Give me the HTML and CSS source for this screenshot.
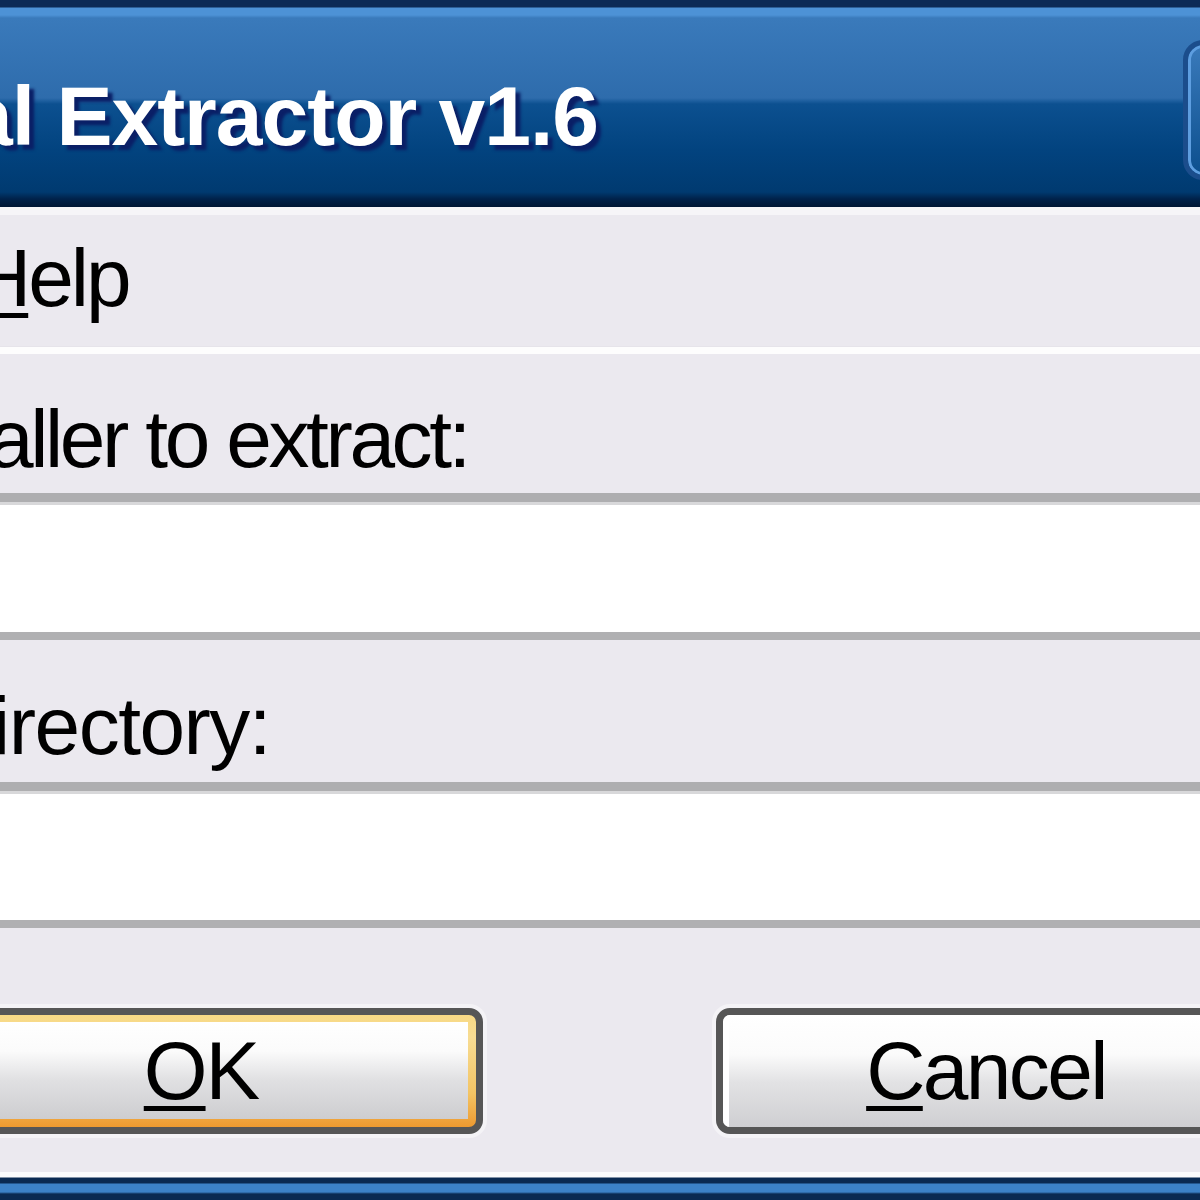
FILE: index.html
```html
<!DOCTYPE html>
<html>
<head>
<meta charset="utf-8">
<link rel="stylesheet" href="styles.css">
</head>
<body>
<div class="window">
  <div class="titlebar">
    <div class="title">al Extractor v1.6</div>
    <div class="min-btn"></div>
  </div>
  <div class="menubar">
    <span class="menu-item"><u>H</u>elp</span>
  </div>
  <div class="sep"></div>
  <div class="label label-first">aller to extract:</div>
  <div class="field"></div>
  <div class="label label-second">irectory:</div>
  <div class="field"></div>
  <div class="buttons">
    <div class="btn btn-default"><div class="face"><u>O</u>K</div></div>
    <div class="btn btn-cancel"><div class="face"><u>C</u>ancel</div></div>
  </div>
  <div class="bottom-frame"></div>
</div>
</body>
</html>
```
FILE: styles.css
```css
html, body {
  margin: 0;
  padding: 0;
  width: 1200px;
  height: 1200px;
  overflow: hidden;
  background: #ebe9ef;
}

.window {
  display: flex;
  flex-direction: column;
  width: 1200px;
  height: 1200px;
  overflow: hidden;
  font-family: "Liberation Sans", Arial, sans-serif;
  color: #000;
}

.titlebar {
  flex: 0 0 207px;
  display: flex;
  align-items: flex-start;
  overflow: hidden;
  background: linear-gradient(to bottom,
    #0c2a55 0px, #0c2a55 7px,
    #4d92d6 8px, #4d92d6 15px,
    #3a7abb 18px, #2e6cac 98px,
    #0c5090 104px, #02437f 150px, #003a70 192px,
    #00224a 199px, #001634 207px);
}

.title {
  flex: 1;
  margin-left: -34px;
  padding-top: 69px;
  font-weight: bold;
  font-size: 84px;
  line-height: 94px;
  letter-spacing: -1px;
  color: #ffffff;
  white-space: nowrap;
  text-shadow: 5px 5px 3px #0a1f66;
}

.min-btn {
  flex: 0 0 60px;
  margin-top: 40px;
  margin-right: -43px;
  height: 140px;
  box-sizing: border-box;
  border: 5px solid #1b4d8c;
  border-radius: 20px;
  box-shadow: inset 0 0 0 3px #5e9ee0;
  background: linear-gradient(to bottom, #3a7abb, #0c4f8e);
}

.menubar {
  flex: 0 0 140px;
  box-sizing: border-box;
  padding-top: 16px;
  border-top: 8px solid #f6f5f8;
  box-shadow: inset 0 -1px 0 #e6e4ea;
  font-size: 82px;
  line-height: 94px;
  letter-spacing: -3px;
  white-space: nowrap;
}

.menu-item {
  display: inline-block;
  margin-left: -28px;
}

u {
  text-decoration: underline;
  text-decoration-thickness: 5px;
  text-underline-offset: 7px;
}

.sep {
  flex: 0 0 7px;
  background: #fdfdfd;
}

.label {
  font-size: 82px;
  line-height: 94px;
  letter-spacing: -2px;
  white-space: nowrap;
  margin-left: -12px;
  box-sizing: border-box;
}

.label-first {
  flex: 0 0 139px;
  padding-top: 38px;
  letter-spacing: -3.4px;
}

.label-second {
  flex: 0 0 142px;
  padding-top: 39px;
  margin-left: -8px;
  letter-spacing: -1.5px;
}

.field {
  flex: 0 0 147px;
  box-sizing: border-box;
  background: #ffffff;
  border-top: 9px solid #aeaeb0;
  border-bottom: 8px solid #b0b0b2;
  box-shadow: inset 0 3px 0 #d8d8da;
}

.field + .label + .field {
  flex-basis: 146px;
}

.buttons {
  flex: 0 0 244px;
  box-sizing: border-box;
  display: flex;
  gap: 233px;
  padding-top: 80px;
  margin-left: -81px;
}

.btn {
  flex: 0 0 564px;
  height: 126px;
  box-sizing: border-box;
  border: 7px solid #565656;
  border-radius: 14px;
  box-shadow: 0 0 0 4px #f4f3f6;
  background: linear-gradient(to bottom, #ffffff, #e6e6e6);
  overflow: hidden;
}

.btn-default {
  padding: 7px 8px 8px 8px;
  background: linear-gradient(to bottom, #f8d985 0%, #f7dc93 20%, #f3c464 70%, #ee9a30 100%);
}

.face {
  height: 100%;
  box-sizing: border-box;
  display: flex;
  align-items: center;
  justify-content: center;
  font-size: 82px;
  letter-spacing: -2px;
  line-height: 94px;
  background: linear-gradient(to bottom, #ffffff 0%, #fbfbfb 35%, #e2e2e4 60%, #cfcfd2 100%);
  border-left: 6px solid #ffffff;
}

.btn-cancel .face {
  padding-right: 30px;
  letter-spacing: -2.6px;
}

.btn-default .face {
  border-left: none;
  background: linear-gradient(to bottom, #ffffff 0%, #fbfbfb 30%, #e0e0e2 60%, #cdcdd0 100%);
}

.bottom-frame {
  flex: 0 0 28px;
  background: linear-gradient(to bottom,
    #fbfbfc 0px, #fbfbfc 5px,
    #0a2a52 6px, #0a2a52 11px,
    #3c82c8 12px, #3c82c8 20px,
    #0a2a52 22px, #0a2a52 28px);
}
```
